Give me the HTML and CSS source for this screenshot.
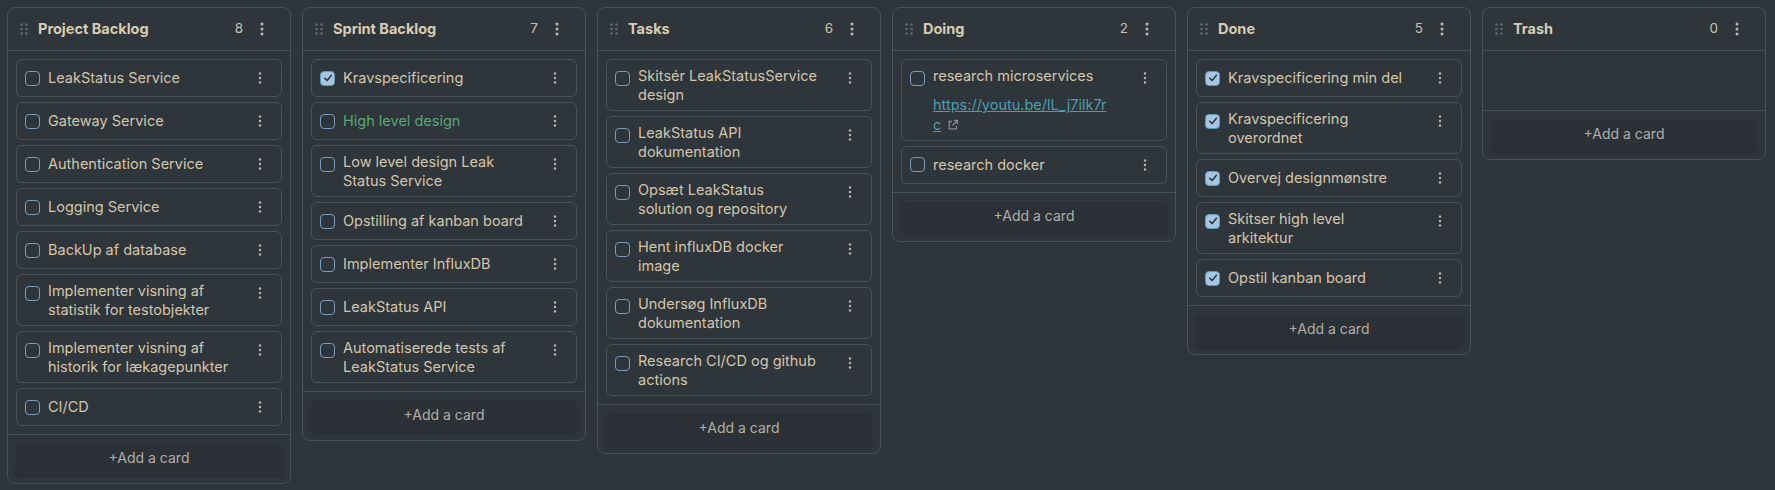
FILE: index.html
```html
<!DOCTYPE html>
<html lang="da">
<head>
<meta charset="utf-8">
<title>Kanban</title>
<link rel="stylesheet" href="styles.css">
</head>
<body>
<svg width="0" height="0" style="position:absolute">
  <defs>
    <symbol id="grip" viewBox="0 0 8 12">
      <circle cx="1.5" cy="1.5" r="1.3"/><circle cx="6.5" cy="1.5" r="1.3"/>
      <circle cx="1.5" cy="6" r="1.3"/><circle cx="6.5" cy="6" r="1.3"/>
      <circle cx="1.5" cy="10.5" r="1.3"/><circle cx="6.5" cy="10.5" r="1.3"/>
    </symbol>
    <symbol id="dots-lg" viewBox="0 0 4 14">
      <circle cx="2" cy="2" r="1.5"/><circle cx="2" cy="7" r="1.5"/><circle cx="2" cy="12" r="1.5"/>
    </symbol>
    <symbol id="dots-sm" viewBox="0 0 4 12">
      <circle cx="2" cy="1.5" r="1.2"/><circle cx="2" cy="6" r="1.2"/><circle cx="2" cy="10.5" r="1.2"/>
    </symbol>
    <symbol id="tick" viewBox="0 0 14 14">
      <path d="M3.2 7.2 L6 10 L11 3.8" fill="none" stroke-width="1.8" stroke-linecap="round" stroke-linejoin="round"/>
    </symbol>
    <symbol id="ext" viewBox="0 0 12 12">
      <path d="M5 2.5H2.2v7.3h7.3V7" fill="none" stroke-width="1.3"/>
      <path d="M6.8 1.5h3.7v3.7M10.5 1.5L5.5 6.5" fill="none" stroke-width="1.3"/>
    </symbol>
  </defs>
</svg>

<main class="board">

  <section class="lane">
    <header class="lane-header">
      <svg class="grip"><use href="#grip"/></svg>
      <h2 class="lane-title">Project Backlog</h2>
      <span class="lane-count">8</span>
      <span class="lane-menu"><svg><use href="#dots-lg"/></svg></span>
    </header>
    <div class="lane-items">
      <div class="item"><span class="check"></span><div class="item-body"><div class="item-title">LeakStatus Service</div></div><span class="item-menu"><svg><use href="#dots-sm"/></svg></span></div>
      <div class="item"><span class="check"></span><div class="item-body"><div class="item-title">Gateway Service</div></div><span class="item-menu"><svg><use href="#dots-sm"/></svg></span></div>
      <div class="item"><span class="check"></span><div class="item-body"><div class="item-title">Authentication Service</div></div><span class="item-menu"><svg><use href="#dots-sm"/></svg></span></div>
      <div class="item"><span class="check"></span><div class="item-body"><div class="item-title">Logging Service</div></div><span class="item-menu"><svg><use href="#dots-sm"/></svg></span></div>
      <div class="item"><span class="check"></span><div class="item-body"><div class="item-title">BackUp af database</div></div><span class="item-menu"><svg><use href="#dots-sm"/></svg></span></div>
      <div class="item"><span class="check"></span><div class="item-body"><div class="item-title">Implementer visning af statistik for testobjekter</div></div><span class="item-menu"><svg><use href="#dots-sm"/></svg></span></div>
      <div class="item"><span class="check"></span><div class="item-body"><div class="item-title">Implementer visning af historik for lækagepunkter</div></div><span class="item-menu"><svg><use href="#dots-sm"/></svg></span></div>
      <div class="item"><span class="check"></span><div class="item-body"><div class="item-title">CI/CD</div></div><span class="item-menu"><svg><use href="#dots-sm"/></svg></span></div>
    </div>
    <footer class="lane-footer"><button class="add-card">+Add a card</button></footer>
  </section>

  <section class="lane">
    <header class="lane-header">
      <svg class="grip"><use href="#grip"/></svg>
      <h2 class="lane-title">Sprint Backlog</h2>
      <span class="lane-count">7</span>
      <span class="lane-menu"><svg><use href="#dots-lg"/></svg></span>
    </header>
    <div class="lane-items">
      <div class="item"><span class="check checked"><svg><use href="#tick"/></svg></span><div class="item-body"><div class="item-title">Kravspecificering</div></div><span class="item-menu"><svg><use href="#dots-sm"/></svg></span></div>
      <div class="item"><span class="check"></span><div class="item-body"><div class="item-title item-title-green">High level design</div></div><span class="item-menu"><svg><use href="#dots-sm"/></svg></span></div>
      <div class="item"><span class="check"></span><div class="item-body"><div class="item-title">Low level design Leak Status Service</div></div><span class="item-menu"><svg><use href="#dots-sm"/></svg></span></div>
      <div class="item"><span class="check"></span><div class="item-body"><div class="item-title">Opstilling af kanban board</div></div><span class="item-menu"><svg><use href="#dots-sm"/></svg></span></div>
      <div class="item"><span class="check"></span><div class="item-body"><div class="item-title">Implementer InfluxDB</div></div><span class="item-menu"><svg><use href="#dots-sm"/></svg></span></div>
      <div class="item"><span class="check"></span><div class="item-body"><div class="item-title">LeakStatus API</div></div><span class="item-menu"><svg><use href="#dots-sm"/></svg></span></div>
      <div class="item"><span class="check"></span><div class="item-body"><div class="item-title">Automatiserede tests af LeakStatus Service</div></div><span class="item-menu"><svg><use href="#dots-sm"/></svg></span></div>
    </div>
    <footer class="lane-footer"><button class="add-card">+Add a card</button></footer>
  </section>

  <section class="lane">
    <header class="lane-header">
      <svg class="grip"><use href="#grip"/></svg>
      <h2 class="lane-title">Tasks</h2>
      <span class="lane-count">6</span>
      <span class="lane-menu"><svg><use href="#dots-lg"/></svg></span>
    </header>
    <div class="lane-items">
      <div class="item"><span class="check"></span><div class="item-body"><div class="item-title">Skitsér LeakStatusService design</div></div><span class="item-menu"><svg><use href="#dots-sm"/></svg></span></div>
      <div class="item"><span class="check"></span><div class="item-body"><div class="item-title">LeakStatus API dokumentation</div></div><span class="item-menu"><svg><use href="#dots-sm"/></svg></span></div>
      <div class="item"><span class="check"></span><div class="item-body"><div class="item-title">Opsæt LeakStatus solution og repository</div></div><span class="item-menu"><svg><use href="#dots-sm"/></svg></span></div>
      <div class="item"><span class="check"></span><div class="item-body"><div class="item-title">Hent influxDB docker image</div></div><span class="item-menu"><svg><use href="#dots-sm"/></svg></span></div>
      <div class="item"><span class="check"></span><div class="item-body"><div class="item-title">Undersøg InfluxDB dokumentation</div></div><span class="item-menu"><svg><use href="#dots-sm"/></svg></span></div>
      <div class="item"><span class="check"></span><div class="item-body"><div class="item-title">Research CI/CD og github actions</div></div><span class="item-menu"><svg><use href="#dots-sm"/></svg></span></div>
    </div>
    <footer class="lane-footer"><button class="add-card">+Add a card</button></footer>
  </section>

  <section class="lane">
    <header class="lane-header">
      <svg class="grip"><use href="#grip"/></svg>
      <h2 class="lane-title">Doing</h2>
      <span class="lane-count">2</span>
      <span class="lane-menu"><svg><use href="#dots-lg"/></svg></span>
    </header>
    <div class="lane-items">
      <div class="item"><span class="check"></span><div class="item-body"><div class="item-title">research microservices</div><div class="item-link"><a href="#">https://youtu.be/lL_j7ilk7r<span class="link-tail">c<svg class="ext"><use href="#ext"/></svg></span></a></div></div><span class="item-menu"><svg><use href="#dots-sm"/></svg></span></div>
      <div class="item"><span class="check"></span><div class="item-body"><div class="item-title">research docker</div></div><span class="item-menu"><svg><use href="#dots-sm"/></svg></span></div>
    </div>
    <footer class="lane-footer"><button class="add-card">+Add a card</button></footer>
  </section>

  <section class="lane">
    <header class="lane-header">
      <svg class="grip"><use href="#grip"/></svg>
      <h2 class="lane-title">Done</h2>
      <span class="lane-count">5</span>
      <span class="lane-menu"><svg><use href="#dots-lg"/></svg></span>
    </header>
    <div class="lane-items">
      <div class="item"><span class="check checked"><svg><use href="#tick"/></svg></span><div class="item-body"><div class="item-title">Kravspecificering min del</div></div><span class="item-menu"><svg><use href="#dots-sm"/></svg></span></div>
      <div class="item"><span class="check checked"><svg><use href="#tick"/></svg></span><div class="item-body"><div class="item-title">Kravspecificering overordnet</div></div><span class="item-menu"><svg><use href="#dots-sm"/></svg></span></div>
      <div class="item"><span class="check checked"><svg><use href="#tick"/></svg></span><div class="item-body"><div class="item-title">Overvej designmønstre</div></div><span class="item-menu"><svg><use href="#dots-sm"/></svg></span></div>
      <div class="item"><span class="check checked"><svg><use href="#tick"/></svg></span><div class="item-body"><div class="item-title">Skitser high level arkitektur</div></div><span class="item-menu"><svg><use href="#dots-sm"/></svg></span></div>
      <div class="item"><span class="check checked"><svg><use href="#tick"/></svg></span><div class="item-body"><div class="item-title">Opstil kanban board</div></div><span class="item-menu"><svg><use href="#dots-sm"/></svg></span></div>
    </div>
    <footer class="lane-footer"><button class="add-card">+Add a card</button></footer>
  </section>

  <section class="lane">
    <header class="lane-header">
      <svg class="grip"><use href="#grip"/></svg>
      <h2 class="lane-title">Trash</h2>
      <span class="lane-count">0</span>
      <span class="lane-menu"><svg><use href="#dots-lg"/></svg></span>
    </header>
    <div class="lane-items lane-items-empty"></div>
    <footer class="lane-footer"><button class="add-card">+Add a card</button></footer>
  </section>

</main>
</body>
</html>
```

FILE: styles.css
```css
* { box-sizing: border-box; }

html, body {
  margin: 0;
  background: #2e353b;
}

body {
  font-family: Inter, "Noto Sans", "Liberation Sans", sans-serif;
  color: #d3c6aa;
  font-size: 14.5px;
  line-height: 19.5px;
}

.board {
  display: flex;
  align-items: flex-start;
  gap: 11px;
  padding: 7px;
}

.lane {
  width: 284px;
  flex: 0 0 284px;
  border: 1px solid #4b535a;
  border-radius: 8px;
  background: #2e353b;
}

.lane-header {
  display: flex;
  align-items: center;
  height: 43px;
  padding: 0 16px 0 12px;
  border-bottom: 1px solid #4b535a;
}

.grip {
  width: 8px;
  height: 12px;
  fill: #626a70;
  flex: none;
}

.lane-title {
  margin: 0 0 0 10px;
  flex: 1;
  font-size: 14.5px;
  font-weight: 700;
  color: #d8cdb2;
}

.lane-count {
  font-size: 13.5px;
  color: #c9c1ae;
  margin-right: 7px;
}

.lane-menu {
  width: 24px;
  height: 24px;
  display: flex;
  align-items: center;
  justify-content: center;
}
.lane-menu svg {
  width: 4px;
  height: 14px;
  fill: #bfb9ab;
}

.lane-items {
  display: flex;
  flex-direction: column;
  gap: 5px;
  padding: 8px;
}

.lane-items-empty {
  min-height: 59px;
}

.item {
  display: flex;
  align-items: flex-start;
  border: 1px solid #4b535a;
  border-radius: 6px;
  padding: 5.5px 8px 5.5px 8px;
}

.check {
  flex: none;
  width: 15px;
  height: 15px;
  margin-top: 5px;
  margin-right: 8px;
  border: 1.5px solid #7a9dbf;
  border-radius: 4px;
  display: flex;
  align-items: center;
  justify-content: center;
}

.check.checked {
  background: #a4c5e3;
  border-color: #5e9fb3;
}
.check.checked svg {
  width: 12px;
  height: 12px;
  stroke: #2e353b;
}

.item-body {
  flex: 1;
  min-width: 0;
  min-height: 25px;
  display: flex;
  flex-direction: column;
  justify-content: center;
}

.item-title-green {
  color: #5aa874;
}

.item-link {
  margin-top: 10px;
  word-break: break-all;
}
.item-link a {
  color: #4f9db1;
  text-decoration: underline;
}
.link-tail {
  white-space: nowrap;
}
.ext {
  width: 12px;
  height: 12px;
  margin-left: 6px;
  vertical-align: -1px;
  stroke: #858a8e;
}

.item-menu {
  flex: none;
  width: 26px;
  height: 25px;
  margin-left: 16px;
  display: flex;
  align-items: center;
  justify-content: center;
}
.item-menu svg {
  width: 4px;
  height: 12px;
  fill: #bdb8ad;
}

.lane-footer {
  border-top: 1px solid #4b535a;
  padding: 8px;
}

.add-card {
  display: block;
  width: 100%;
  height: 32px;
  padding: 0 0 3px;
  border: none;
  border-radius: 6px;
  background: #2b3137;
  box-shadow: 0 1px 3px rgba(0, 0, 0, 0.35), 0 0 0 1px rgba(255, 255, 255, 0.04);
  color: #b3afa6;
  font-family: Inter, "Noto Sans", "Liberation Sans", sans-serif;
  font-size: 14px;
}
```
